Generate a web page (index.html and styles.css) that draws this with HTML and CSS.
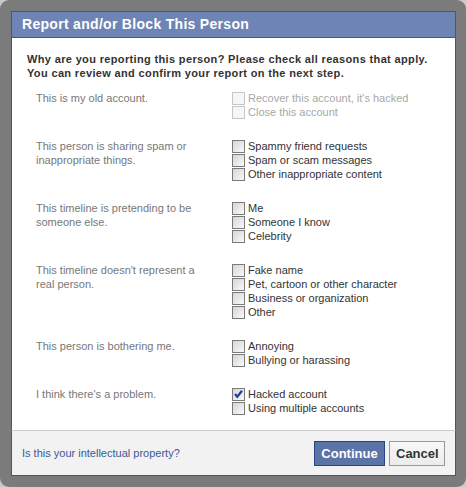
FILE: index.html
```html
<!DOCTYPE html>
<html>
<head>
<meta charset="utf-8">
<link rel="stylesheet" href="styles.css">
</head>
<body>
<div class="frame">
  <div class="dialog">
    <div class="header">Report and/or Block This Person</div>
    <div class="content">
      <p class="question">Why are you reporting this person? Please check all reasons that apply.<br>You can review and confirm your report on the next step.</p>
      <div class="groups">
        <div class="group">
          <div class="reason">This is my old account.</div>
          <div class="options">
            <label class="opt disabled"><span class="cb"></span>Recover this account, it's hacked</label>
            <label class="opt disabled"><span class="cb"></span>Close this account</label>
          </div>
        </div>
        <div class="group">
          <div class="reason">This person is sharing spam or inappropriate things.</div>
          <div class="options">
            <label class="opt"><span class="cb"></span>Spammy friend requests</label>
            <label class="opt"><span class="cb"></span>Spam or scam messages</label>
            <label class="opt"><span class="cb"></span>Other inappropriate content</label>
          </div>
        </div>
        <div class="group">
          <div class="reason">This timeline is pretending to be someone else.</div>
          <div class="options">
            <label class="opt"><span class="cb"></span>Me</label>
            <label class="opt"><span class="cb"></span>Someone I know</label>
            <label class="opt"><span class="cb"></span>Celebrity</label>
          </div>
        </div>
        <div class="group">
          <div class="reason">This timeline doesn't represent a real person.</div>
          <div class="options">
            <label class="opt"><span class="cb"></span>Fake name</label>
            <label class="opt"><span class="cb"></span>Pet, cartoon or other character</label>
            <label class="opt"><span class="cb"></span>Business or organization</label>
            <label class="opt"><span class="cb"></span>Other</label>
          </div>
        </div>
        <div class="group">
          <div class="reason">This person is bothering me.</div>
          <div class="options">
            <label class="opt"><span class="cb"></span>Annoying</label>
            <label class="opt"><span class="cb"></span>Bullying or harassing</label>
          </div>
        </div>
        <div class="group">
          <div class="reason">I think there's a problem.</div>
          <div class="options">
            <label class="opt"><span class="cb checked"><svg width="11" height="11" viewBox="0 0 11 11"><path d="M2 5 L4.3 7.8 L9 1.8" fill="none" stroke="#1c3f94" stroke-width="2.2"/></svg></span>Hacked account</label>
            <label class="opt"><span class="cb"></span>Using multiple accounts</label>
          </div>
        </div>
      </div>
    </div>
    <div class="footer">
      <a class="ip-link" href="#">Is this your intellectual property?</a>
      <div class="buttons">
        <button class="btn btn-primary">Continue</button>
        <button class="btn btn-cancel">Cancel</button>
      </div>
    </div>
  </div>
</div>
</body>
</html>
```
FILE: styles.css
```css
html, body {
  margin: 0;
  padding: 0;
  background: #c9c9c9;
}
body {
  font-family: "Liberation Sans", Arial, sans-serif;
  font-size: 11px;
}
.frame {
  width: 466px;
  height: 487px;
  box-sizing: border-box;
  padding: 11px 10px 11px 11px;
  background: #7b7b7b;
  border-radius: 9px;
}
.dialog {
  height: 100%;
  display: flex;
  flex-direction: column;
  background: #fff;
}
.header {
  height: 25px;
  border: 1px solid #3b5998;
  background: #6d84b4;
  color: #fff;
  font-size: 14px;
  font-weight: bold;
  letter-spacing: 0.3px;
  line-height: 25px;
  padding-left: 10px;
}
.content {
  flex: 1;
  border-left: 1px solid #555;
  border-right: 1px solid #555;
  padding: 14px 15px 0 15px;
}
.question {
  margin: 0;
  font-weight: bold;
  color: #333;
  line-height: 14px;
  letter-spacing: 0.35px;
}
.groups {
  margin-top: 11px;
  padding-left: 9px;
  display: flex;
  flex-direction: column;
  gap: 20px;
}
.group {
  display: flex;
}
.reason {
  width: 168px;
  margin-right: 28px;
  color: #777;
  line-height: 14px;
}
.options {
  display: flex;
  flex-direction: column;
}
.opt {
  display: flex;
  align-items: center;
  height: 14px;
  line-height: 14px;
  color: #333;
}
.opt.disabled {
  color: #a8a8a8;
}
.cb {
  width: 11px;
  height: 11px;
  border: 1px solid #7a7a7a;
  background: linear-gradient(135deg, #d6d6d6, #f9f9f9);
  margin-right: 3px;
  display: flex;
  align-items: center;
  justify-content: center;
}
.disabled .cb {
  border-color: #c6c6c6;
  background: #f6f6f6;
}
.cb svg {
  display: block;
}
.footer {
  height: 44px;
  box-sizing: content-box;
  border: 1px solid #555;
  border-top: 1px solid #ccc;
  background: #f2f2f2;
  display: flex;
  align-items: center;
  justify-content: space-between;
  padding: 0 10px;
}
.ip-link {
  color: #3b5998;
  text-decoration: none;
}
.buttons {
  display: flex;
  gap: 4px;
}
.btn {
  height: 25px;
  font-family: "Liberation Sans", Arial, sans-serif;
  font-size: 13px;
  font-weight: bold;
  padding: 0 6px;
  cursor: pointer;
}
.btn-primary {
  width: 71px;
  background: #5b74a8;
  border: 1px solid #29447e;
  color: #fff;
}
.btn-cancel {
  width: 56px;
  background: linear-gradient(#f7f7f7, #ececec);
  border: 1px solid #999;
  color: #333;
}
```
